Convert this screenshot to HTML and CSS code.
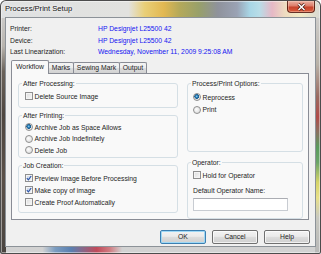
FILE: index.html
```html
<!DOCTYPE html>
<html lang="en">
<head>
  <meta charset="UTF-8" />
  <title>Process/Print Setup</title>
  <link rel="stylesheet" href="styles.css">
</head>
<body>
  <div class="window">
    <div class="titlebar">
      <span class="title">Process/Print Setup</span>
      <div class="close">
        <svg width="9" height="8" viewBox="0 0 9 8">
          <path d="M1.5 1 L7.5 7 M7.5 1 L1.5 7" stroke="#4a1a10" stroke-width="3" />
          <path d="M1.5 1 L7.5 7 M7.5 1 L1.5 7" stroke="#fff" stroke-width="1.5" />
        </svg>
      </div>
    </div>

    <div class="client">
      <!-- printer info -->
      <div class="info">
        <span>Printer:</span><span class="val">HP Designjet L25500 42</span>
        <span>Device:</span><span class="val">HP Designjet L25500 42</span>
        <span>Last Linearization:</span><span class="val">Wednesday, November 11, 2009 9:25:08 AM</span>
      </div>

      <div class="tabs">
        <div class="tab active">Workflow</div>
        <div class="tab marks">Marks</div>
        <div class="tab sewing">Sewing Mark</div>
        <div class="tab output">Output</div>
      </div>

      <div class="panel">
        <div class="col">
          <fieldset class="grp g1">
            <legend>After Processing:</legend>
            <label class="row"><span class="cb"></span>Delete Source Image</label>
          </fieldset>

          <fieldset class="grp g2">
            <legend>After Printing:</legend>
            <label class="row"><span class="rb on"></span>Archive Job as Space Allows</label>
            <label class="row"><span class="rb"></span>Archive Job Indefinitely</label>
            <label class="row"><span class="rb"></span>Delete Job</label>
          </fieldset>

          <fieldset class="grp g3">
            <legend>Job Creation:</legend>
            <label class="row"><span class="cb on"><svg viewBox="0 0 6 6"><path d="M0.8 3.2 L2.4 4.8 L5.2 1" fill="none" stroke="#2c55a8" stroke-width="1.2" /></svg></span>Preview Image Before Processing</label>
            <label class="row"><span class="cb on"><svg viewBox="0 0 6 6"><path d="M0.8 3.2 L2.4 4.8 L5.2 1" fill="none" stroke="#2c55a8" stroke-width="1.2" /></svg></span>Make copy of image</label>
            <label class="row"><span class="cb"></span>Create Proof Automatically</label>
          </fieldset>
        </div>

        <div class="col right">
          <fieldset class="grp g4">
            <legend>Process/Print Options:</legend>
            <label class="row"><span class="rb on"></span>Reprocess</label>
            <label class="row"><span class="rb"></span>Print</label>
          </fieldset>

          <fieldset class="grp g5">
            <legend>Operator:</legend>
            <label class="row"><span class="cb"></span>Hold for Operator</label>
            <div class="field-label">Default Operator Name:</div>
            <div class="txt"></div>
          </fieldset>
        </div>
      </div>

      <div class="buttons">
        <div class="btn default">OK</div>
        <div class="btn">Cancel</div>
        <div class="btn">Help</div>
      </div>
    </div>
  </div>
</body>
</html>
```

FILE: styles.css
```css
* {
  box-sizing: border-box;
}

body {
  margin: 0;
  font-family: 'Liberation Sans', Arial, sans-serif;
  font-size: 6.8px;
  color: #1e1e1e;
  background: #fff;
}

.window {
  width: 321px;
  height: 254px;
  padding: 0 4px 6px 4px;
  border: 1px solid rgba(30, 30, 30, 0.75);
  border-radius: 6px 6px 2px 2px;
  box-shadow: inset 0 0 0 1px rgba(255, 255, 255, 0.45);
  background:
    linear-gradient(90deg, #dfe1e2 0, #e2e2df 40%, #e9cf78 45%, #e2b852 51%, #b4a95a 56%, #98a06a 62%, #8f929c 68%, #9aa2b4 74%, #a8d6e6 78%, #b8dde8 81%, #e6b8c6 85%, #eedcc0 89%, #f2ecc8 94%, #d8d8d2 100%) left top / 100% 17px no-repeat,
    linear-gradient(180deg, #d8d8d8 0, #b8b4ae 18%, #6a625a 28%, #4e4640 45%, #5a5048 70%, #4a4440 100%) left top / 5px 100% no-repeat,
    linear-gradient(180deg, #d6d6d6 0, #b8b2a8 25%, #9a6a60 38%, #b04a48 46%, #8a7060 52%, #5a9a5c 58%, #6aa468 64%, #d6d468 72%, #e8e088 78%, #c8c8c0 86%, #b8b8b8 100%) right top / 5px 100% no-repeat,
    linear-gradient(90deg, #d2d2d2 0, #d2d2d2 13%, #7b9cc0 17%, #5a7fb0 22%, #c04a5a 30%, #d07a80 34%, #d2d2d2 38%, #d2d2d2 100%) left bottom / 100% 7px no-repeat,
    #d6d6d6;
}

/* title bar */
.titlebar {
  display: flex;
  justify-content: space-between;
  height: 16px;
}

.title {
  font-size: 7.6px;
  line-height: 15px;
  color: #111;
  text-shadow: 0 0 5px rgba(255, 255, 255, 0.95), 0 0 2px rgba(255, 255, 255, 0.9);
}

.close {
  display: flex;
  align-items: center;
  justify-content: center;
  width: 28px;
  height: 12px;
  margin-right: 1px;
  border: 1px solid rgba(70, 20, 10, 0.8);
  border-top: none;
  border-radius: 0 0 4px 4px;
  background: linear-gradient(#eab0a2, #dc7c68 45%, #c7432c 55%, #d85a3a 100%);
  box-shadow: inset 0 0 0 1px rgba(255, 220, 200, 0.4);
}

/* client area */
.client {
  width: 311px;
  height: 230px;
  border: 1px solid #8c9298;
  background: #f0f0f0;
}

.info {
  display: grid;
  grid-template-columns: 88px auto;
  padding: 5px 0 0 4px;
  line-height: 11.5px;
}

.val {
  color: #1414f0;
}

.tabs {
  display: flex;
  align-items: flex-end;
  height: 13px;
  margin: 2.5px 0 0 5px;
}

.tab {
  height: 11px;
  width: 26px;
  margin-left: -1px;
  border: 1px solid #898c95;
  border-bottom: none;
  border-radius: 2px 2px 0 0;
  background: linear-gradient(#f4f4f4, #ececec 50%, #dedede 50%, #d2d2d2);
  text-align: center;
  line-height: 10px;
}

.tab.active {
  position: relative;
  z-index: 1;
  width: 38px;
  height: 14px;
  margin-left: 0;
  margin-bottom: -1px;
  background: #f9f9f9;
  line-height: 12px;
}

.tab.sewing {
  width: 47px;
}

.tab.output {
  width: 28px;
}

.panel {
  display: grid;
  grid-template-columns: 160px 116px;
  column-gap: 9px;
  width: 298px;
  height: 147px;
  margin-left: 5px;
  padding: 3.5px 5px 0 6px;
  border: 1px solid #898c95;
  background: #f9f9f9;
}

.col {
  display: flex;
  flex-direction: column;
  gap: 2px;
}

.col.right {
  gap: 5px;
}

/* group boxes */
.grp {
  margin: 0;
  min-width: 0;
  border: 1px solid #d5dfe5;
  border-radius: 3px;
  padding: 1px 4px 0 6px;
}

.grp legend {
  padding: 0 1px;
  margin-left: -3px;
  line-height: 11px;
}

.right .grp {
  padding-left: 5px;
}

.right .grp legend {
  margin-left: -2px;
}

.g1 {
  padding-top: 1.5px;
  padding-bottom: 4.5px;
}

.g2 {
  padding-bottom: 1px;
}

.g2 .row {
  height: 11.5px;
}

.g3 {
  padding-bottom: 3.5px;
}

.g4 {
  flex: 1;
  padding-top: 2.5px;
}

.g4 .row {
  height: 12.5px;
}

.g5 {
  padding-bottom: 7px;
}

.row {
  display: flex;
  align-items: center;
  gap: 1.5px;
  height: 12px;
}

.cb {
  display: flex;
  align-items: center;
  justify-content: center;
  width: 8px;
  height: 8px;
  border: 1px solid #8f8f8f;
  background: linear-gradient(135deg, #dcdcdc, #f8f8f8);
  box-shadow: inset 0 0 0 1px #f4f4f4;
}

.cb.on {
  background: linear-gradient(135deg, #c9d4e6, #eef2fa);
}

.cb svg {
  width: 6px;
  height: 6px;
}

.rb {
  width: 8px;
  height: 8px;
  border: 1px solid #8f8f8f;
  border-radius: 50%;
  background: radial-gradient(circle at 40% 40%, #fdfdfd, #d6d6d6);
}

.rb.on {
  background:
    radial-gradient(circle at 45% 40%, #9ad2f2 0, #2a7fb8 1.2px, #175a8c 2.2px, rgba(23, 90, 140, 0) 2.6px),
    radial-gradient(circle at 40% 40%, #fdfdfd, #d6d6d6);
}

.field-label {
  margin-top: 4px;
  line-height: 11px;
}

.txt {
  width: 95px;
  height: 13px;
  margin-top: 2px;
  border: 1px solid #c8ccd2;
  border-top-color: #abadb3;
  background: #fff;
}

/* dialog buttons */
.buttons {
  display: flex;
  justify-content: flex-end;
  gap: 6px;
  margin-top: 10px;
  padding-right: 5px;
}

.btn {
  width: 46px;
  height: 14px;
  border: 1px solid #707070;
  border-radius: 2px;
  background: linear-gradient(#f2f2f2, #ebebeb 45%, #dddddd 50%, #cfcfcf);
  box-shadow: inset 0 0 0 1px rgba(255, 255, 255, 0.7);
  text-align: center;
  line-height: 12px;
}

.btn.default {
  border-color: #3c7fb1;
  box-shadow: inset 0 0 0 1px #9ed8f6;
  background: linear-gradient(#eaf6fd, #d9f0fc 45%, #bee6fd 50%, #a7d9f5);
  background: linear-gradient(#f2f2f2, #ebebeb 45%, #dddddd 50%, #cfcfcf);
}
```
